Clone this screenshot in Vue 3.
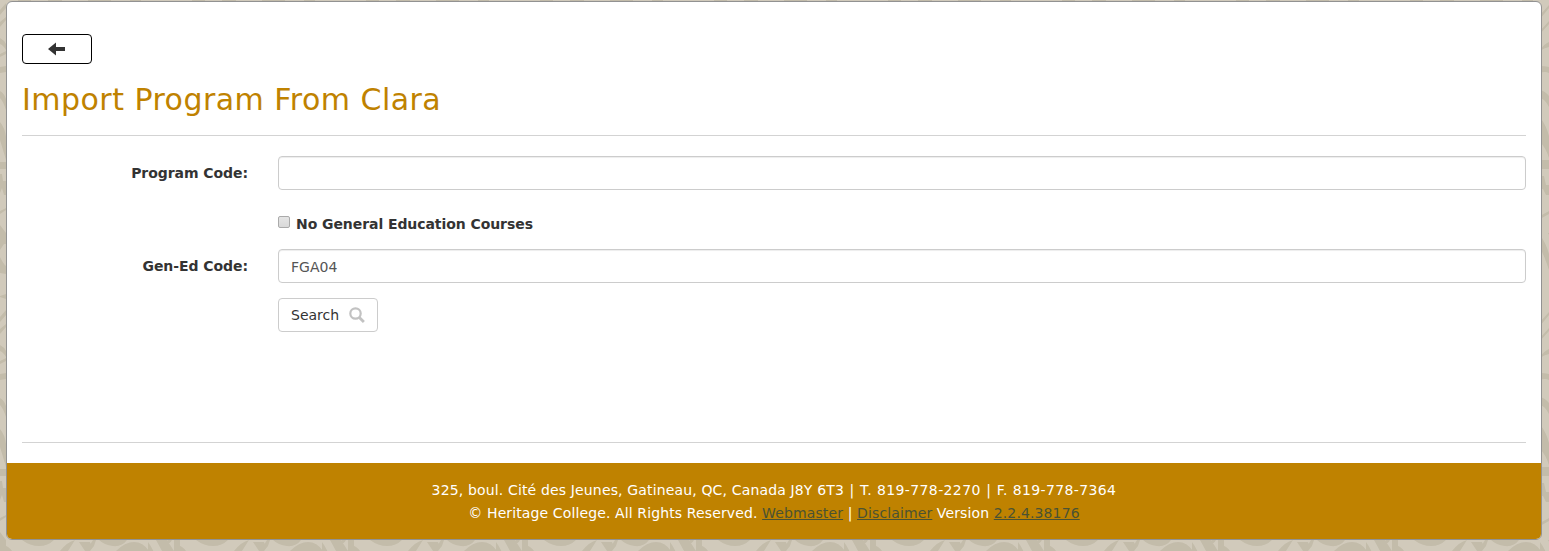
<script setup>
import { ref } from 'vue'
const programCode = ref('')
const noGenEd = ref(false)
const genEdCode = ref('FGA04')
</script>

<template>
  <div class="page">
    <svg class="backdrop" aria-hidden="true">
      <defs>
        <pattern id="swirls" width="174" height="307" patternUnits="userSpaceOnUse">
          <g fill="#c3bcaa">
            <path d="M0 10 6 3V8L0 15ZM0 22 6 17V20L0 27ZM0 38Q4 40 6 44V50Q3 45 0 44ZM0 54 6 51V54L0 57ZM0 67 6 66V72L0 73ZM0 91Q4 93 6 99V110Q3 101 0 98ZM0 122Q5 128 6 137V160L0 140ZM0 162H6V169H0ZM0 174H2L3 181H6V195H4L2 188 0 193ZM0 211 6 208V210L0 214ZM0 225 6 233V241L0 250ZM0 257Q4 265 6 266V274L0 273ZM0 296 6 294V299L0 297Z" />
            <path d="M148 15 157 5V8L148 19ZM148 31 157 21V24L148 34ZM148 50Q152 44 157 42V47Q152 48 148 51ZM148 66Q153 66 157 67V73Q153 71 148 73ZM148 90Q153 91 157 96V107Q153 99 148 98ZM148 117Q155 127 157 136V158Q154 148 148 142ZM148 160H157V169H148ZM148 176H152L154 185H157V195H154L151 189H148ZM148 216 157 211V214L148 219ZM148 235Q154 243 157 254V270Q152 255 148 248Z" />
            <path d="M22 233H54Q48 239 39 239T22 233ZM0 236Q10 240 12 244H0ZM79 235H90L92 241 85 244ZM99 233H127Q122 240 113 239T99 233ZM94 239 90 244H86L93 233H96ZM116 244Q125 235 134 235T149 244ZM156 233H167L174 244H162ZM168 233H172Q170 238 160 240 166 237 168 233ZM60 244Q67 235 75 233L68 244Z" />
            <path d="M18 0H31V1H18ZM48 0H62V1H48ZM88 0H111V1H88ZM130 0H141V1H130Z" />
          </g>
        </pattern>
      </defs>
      <rect width="100%" height="100%" fill="url(#swirls)" />
    </svg>
    <div class="panel">
      <main>
        <button class="back" aria-label="Back">
          <svg width="17" height="14" viewBox="0 0 17 14"><path d="M0 7 8 .6V5H17V9H8V13.4Z" fill="#333" /></svg>
        </button>
        <h1>Import Program From Clara</h1>
        <form @submit.prevent>
          <div class="row">
            <label class="name" for="program">Program Code:</label>
            <input id="program" v-model="programCode" class="field" type="text">
          </div>
          <label class="check"><input v-model="noGenEd" type="checkbox"><span>No General Education Courses</span></label>
          <div class="row">
            <label class="name" for="gened">Gen-Ed Code:</label>
            <input id="gened" v-model="genEdCode" class="field" type="text">
          </div>
          <button class="search"><span>Search</span>
            <svg width="16" height="16" viewBox="0 0 16 16" fill="none" stroke="#c2c2c2"><circle cx="6.5" cy="6.5" r="5.2" stroke-width="2.2" /><path d="m10.4 10.4 4.5 4.5" stroke-width="2.8" /></svg>
          </button>
        </form>
      </main>
      <footer>
        <div class="address">325, boul. Cité des Jeunes, Gatineau, QC, Canada J8Y 6T3 <i>|</i> <span class="phone">T. 819-778-2270</span> <i>|</i> <span class="phone">F. 819-778-7364</span></div>
        <div class="legal">© Heritage College. All Rights Reserved. <a href="#">Webmaster</a> | <a href="#">Disclaimer</a> Version <a href="#">2.2.4.38176</a></div>
      </footer>
    </div>
  </div>
</template>

<style scoped>
* { box-sizing: border-box; }
.page { position: relative; height: 551px; padding: 1px 7px 0 6px; background: #d1cabb; color: #333; font: 14px/20px Verdana, "DejaVu Sans", sans-serif; overflow: hidden; }
.backdrop { position: absolute; inset: 0; width: 100%; height: 100%; }
.panel { position: relative; height: 539px; border: 1px solid #929292; border-radius: 6px; background: #fff; overflow: hidden; }
main { height: 461px; padding: 32px 15px 0; }
.back { display: flex; align-items: center; justify-content: center; width: 70px; height: 30px; padding: 0 1px 0 0; border: 1px solid #000; border-radius: 4px; background: #fff; }
h1 { height: 72px; margin: 0; padding-top: 19px; border-bottom: 1px solid #d3d3d3; color: #bf8200; font-size: 30px; font-weight: 400; line-height: 34px; letter-spacing: .47px; white-space: nowrap; }
form { height: 307px; padding-top: 20px; border-bottom: 1px solid #d3d3d3; }
.row { display: flex; height: 34px; }
.name { width: 256px; padding: 7px 30px 0 0; text-align: right; font-weight: 700; letter-spacing: -.06px; white-space: nowrap; }
.field { flex: 1; min-width: 0; height: 34px; padding: 8px 12px 6px; border: 1px solid #ccc; border-radius: 4px; background: #fff; box-shadow: inset 0 1px 1px rgba(0,0,0,.075); color: #555; font: 14px/18px Verdana, "DejaVu Sans", sans-serif; outline: 0; }
.check { display: flex; height: 59px; margin-left: 256px; padding-top: 24px; font-weight: 700; letter-spacing: -.07px; white-space: nowrap; }
.check input { appearance: none; width: 12px; height: 12px; margin: 2px 6px 0 0; border: 1px solid #aaa; border-radius: 2px; background: linear-gradient(#e5e5e5, #d9d9d9); }
.search { display: flex; align-items: center; width: 100px; height: 34px; margin: 15px 0 0 256px; padding: 0 12px; border: 1px solid #ccc; border-radius: 4px; background: #fff; color: #333; font: inherit; }
.search svg { flex: none; margin-left: auto; }
footer { height: 76px; padding-top: 16px; background: #bf8200; color: #fff; font-size: 14px; line-height: 23px; text-align: center; white-space: nowrap; }
.address { letter-spacing: .15px; }
.address i { margin: 0 1px; font-style: normal; }
.phone { letter-spacing: .38px; }
.legal { letter-spacing: .12px; }
a { color: #4a5233; text-decoration: underline; }
</style>
